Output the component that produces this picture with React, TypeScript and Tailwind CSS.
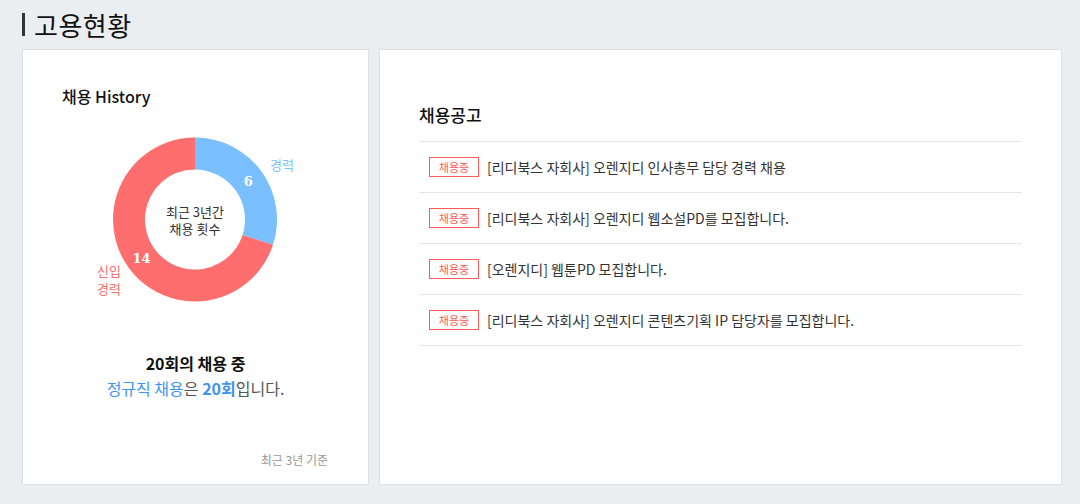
import React from 'react';

const postings = [
    '[리디북스 자회사] 오렌지디 인사총무 담당 경력 채용',
    '[리디북스 자회사] 오렌지디 웹소설PD를 모집합니다.',
    '[오렌지디] 웹툰PD 모집합니다.',
    '[리디북스 자회사] 오렌지디 콘텐츠기획 IP 담당자를 모집합니다.',
];

const font = { fontFamily: '"Noto Sans CJK KR", "Noto Sans", sans-serif' };

// point on a circle, angle measured clockwise from 12 o'clock
const pt = (cx: number, cy: number, r: number, deg: number) => {
    const a = (deg * Math.PI) / 180;
    return [cx + r * Math.sin(a), cy - r * Math.cos(a)];
};

const arc = (cx: number, cy: number, ro: number, ri: number, a0: number, a1: number) => {
    const large = a1 - a0 > 180 ? 1 : 0;
    const [x0, y0] = pt(cx, cy, ro, a0);
    const [x1, y1] = pt(cx, cy, ro, a1);
    const [x2, y2] = pt(cx, cy, ri, a1);
    const [x3, y3] = pt(cx, cy, ri, a0);
    return `M${x0} ${y0} A${ro} ${ro} 0 ${large} 1 ${x1} ${y1} L${x2} ${y2} A${ri} ${ri} 0 ${large} 0 ${x3} ${y3} Z`;
};

const Donut = () => {
    const cx = 172;
    const cy = 91.5;
    const career = 6;
    const fresh = 14;
    const split = (career / (career + fresh)) * 360;
    const [bx, by] = pt(cx, cy, 66, split / 2);
    const [rx, ry] = pt(cx, cy, 66, split + (360 - split) / 2);
    return (
        <svg width="345" height="180" viewBox="0 0 345 180" className="block">
            <path d={arc(cx, cy, 82, 50, 0, split)} fill="#7abfff" />
            <path d={arc(cx, cy, 82, 50, split, 360)} fill="#ff6e6e" />
            <g fontFamily='"DejaVu Serif", serif' fontWeight="bold" fontSize="13" fill="#fff" textAnchor="middle">
                <text x={bx} y={by + 5}>{career}</text>
                <text x={rx} y={ry + 5}>{fresh}</text>
            </g>
            <g fontFamily='"Noto Sans CJK KR", sans-serif' fontSize="13" fill="#333" textAnchor="middle">
                <text x={cx} y={cy - 3}>최근 3년간</text>
                <text x={cx} y={cy + 14}>채용 횟수</text>
            </g>
            <g fontFamily='"Noto Sans CJK KR", sans-serif' fontSize="13">
                <text x="247" y="42" fill="#7abfff">경력</text>
                <text x="74" y="148" fill="#ff6e6e">신입</text>
                <text x="74" y="166" fill="#ff6e6e">경력</text>
            </g>
        </svg>
    );
};

export default function App() {
    return (
        <div className="w-[1080px] h-[504px] bg-[#ebeef1] text-[#222]" style={font}>
            <div className="h-[49px] pl-[22px] flex items-center">
                <span className="w-[3px] h-[23px] bg-[#333]"></span>
                <h1 className="ml-[9px] text-[26px] leading-[30px] text-[#111] tracking-[0.5px]">고용현황</h1>
            </div>
            <div className="flex gap-[10px] pl-[22px]">
                <div className="w-[347px] h-[436px] bg-white border border-[#dde1e5] flex flex-col">
                    <h2 className="mt-[36px] ml-[39px] text-[16px] leading-[20px] font-medium text-[#111]">채용 History</h2>
                    <div className="mt-[22px]">
                        <Donut />
                    </div>
                    <div className="mt-[43px] text-center text-[16px] leading-[24px]">
                        <p className="font-bold text-[#111]">20회의 채용 중</p>
                        <p className="mt-[1px] text-[#555]">
                            <span className="text-[#3f94f0]">정규직 채용</span>은{' '}
                            <span className="text-[#3f94f0] font-bold">20회</span>입니다.
                        </p>
                    </div>
                    <p className="mt-auto mb-[17px] mr-[40px] text-right text-[12px] leading-[14px] text-[#999]">최근 3년 기준</p>
                </div>
                <div className="w-[683px] h-[436px] bg-white border border-[#dde1e5] px-[39px]">
                    <h2 className="mt-[55px] text-[17px] leading-[20px] font-medium text-[#111]">채용공고</h2>
                    <ul className="mt-[16px] border-t border-[#e6e6e6]">
                        {postings.map((title) => (
                            <li key={title} className="h-[51px] border-b border-[#e6e6e6] flex items-center pl-[10px]">
                                <span className="w-[50px] h-[20px] border border-[#ff5a5a] text-[#ff5a5a] text-[11px] leading-[18px] text-center">채용중</span>
                                <span className="ml-[8px] text-[14px] text-[#333]">{title}</span>
                            </li>
                        ))}
                    </ul>
                </div>
            </div>
        </div>
    );
}
